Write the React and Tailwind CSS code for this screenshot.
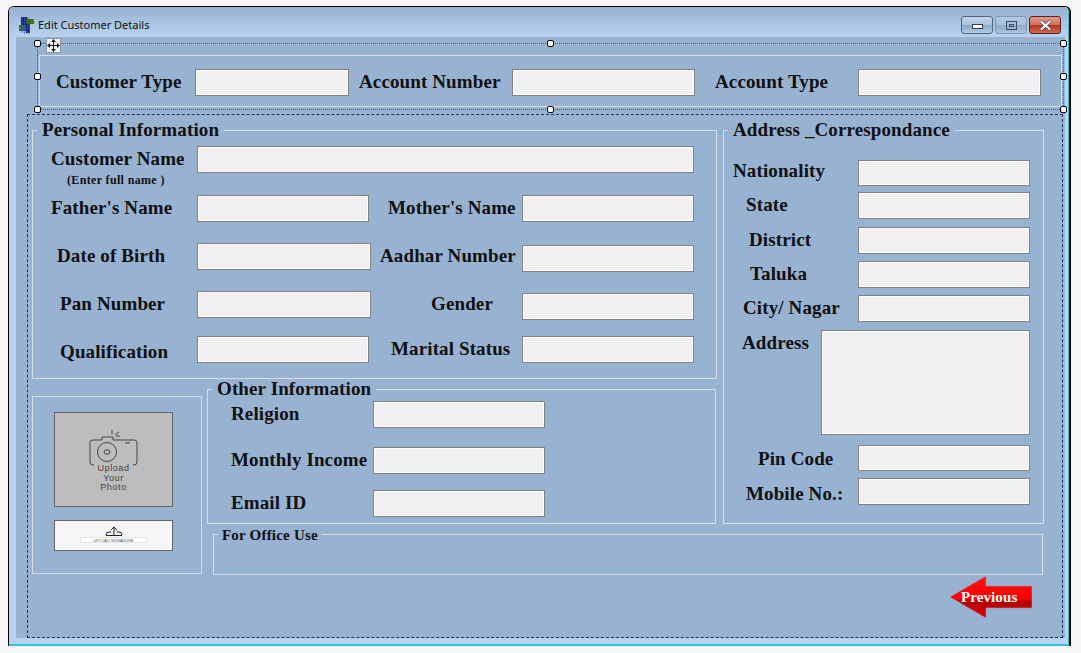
const serif = "font-['Liberation_Serif',serif] font-bold text-[#101010]";
const input = "block shrink-0 border border-[#808080] bg-[#f0f0f0] shadow-[inset_0_0_0_1px_#fff] outline-none";

function Legend({ className, children }) {
  return <span className={`absolute ${serif} bg-[#98b3d1] ${className}`}>{children}</span>;
}

function Label({ className, children }) {
  return (
    <span className={`flex h-[27px] shrink-0 items-center whitespace-nowrap text-[19px] tracking-[0.12px] ${serif} ${className}`}>
      {children}
    </span>
  );
}

function Handle({ className }) {
  return <span className={`absolute h-[7px] w-[7px] rounded-[2px] border border-black bg-white ${className}`} />;
}

function WindowIcon() {
  return (
    <svg width="16" height="17" viewBox="0 0 16 17" className="mr-[3px]">
      <rect x="2" y="0" width="6" height="9" fill="#14246e" />
      <rect x="7" y="2" width="8" height="5" fill="#2f6a1c" />
      <rect x="0" y="8" width="7" height="6" fill="#2f6a1c" />
      <rect x="7" y="7" width="4" height="9" fill="#14246e" />
      <path d="M3.5 0v16M5.5 0v17M8.5 0v17M10.5 1v15" stroke="#3b58c8" strokeWidth="0.7" />
      <path d="M12 3.5h3M12 5.5h4M0 10h2M0 12h2" stroke="#6d9a55" strokeWidth="0.6" />
    </svg>
  );
}

function WindowButtons() {
  return (
    <div className="flex gap-[2px]">
      <div className="flex h-[18px] w-[32px] items-end justify-center rounded-[3px] border border-[#4f6580] bg-[linear-gradient(#c3d6ea_0%,#a9c2dc_48%,#8aa7c6_52%,#b5cde6_100%)] pb-[4px]">
        <span className="h-[5px] w-[11px] border border-[#2e3f52] bg-white" />
      </div>
      <div className="flex h-[18px] w-[32px] items-center justify-center rounded-[3px] border border-[#7f98b5] bg-[linear-gradient(#b4cae1_0%,#a6bfd9_48%,#8fabc9_52%,#aac3de_100%)]">
        <span className="flex h-[9px] w-[11px] items-center justify-center border border-[#3b4d62]">
          <span className="h-[3px] w-[5px] border border-[#3b4d62]" />
        </span>
      </div>
      <div className="flex h-[18px] w-[32px] items-center justify-center rounded-[3px] border border-[#5c1f1a] bg-[linear-gradient(#dc9a8a_0%,#d0705c_48%,#b8321f_52%,#cf6a50_100%)]">
        <svg width="13" height="11" viewBox="0 0 13 11">
          <path d="M2 1.5l9 8M11 1.5l-9 8" stroke="#3a4756" strokeWidth="3.6" />
          <path d="M2 1.5l9 8M11 1.5l-9 8" stroke="#fff" strokeWidth="2.2" />
        </svg>
      </div>
    </div>
  );
}

function MoveIcon() {
  return (
    <span className="absolute left-[8px] top-[-6px] flex h-[15px] w-[15px] items-center justify-center rounded-[1px] border border-[#8a97a8] bg-[#f4f6fa]">
      <svg width="13" height="13" viewBox="0 0 13 13" fill="#1c1c1c">
        <path d="M6 3h1v7H6zM3 6h7v1H3z" />
        <path d="M6.5 0L9 3H4zM6.5 13L4 10h5zM0 6.5L3 4v5zM13 6.5L10 9V4z" />
      </svg>
    </span>
  );
}

function PhotoBox() {
  return (
    <div className="mt-[7px] h-[178px] w-[170px] border border-[#d5dbe3] pl-[21px] pt-[15px]">
      <div className="flex h-[95px] w-[119px] flex-col items-center border border-[#666] bg-[#bdbdbd] pt-[14px]">
        <svg width="52" height="42" viewBox="0 0 52 42" fill="none" stroke="#444" strokeWidth="1" className="-ml-[2px]">
          <path d="M7 38H6q-3 0-3-3V15q0-2 3-2h9v-3h11v3h21q3 0 3 2v20q0 3-3 3h-1" />
          <circle cx="20" cy="25" r="9.5" />
          <ellipse cx="20" cy="25" rx="3" ry="2.2" />
          <path d="M38 16h5M25 3v4M28 8l4-3M29 9h4" />
        </svg>
        <div className="-mt-[5px] text-center font-['Liberation_Sans',sans-serif] text-[9px] leading-[9.5px] tracking-[0.6px] text-[#444]">
          Upload
          <br />
          Your
          <br />
          Photo
        </div>
      </div>
      <div className="mt-[13px] flex h-[31px] w-[119px] flex-col items-center border border-[#666] bg-[#f6f6f6] pt-[5px]">
        <svg width="18" height="10" viewBox="0 0 18 10" fill="none" stroke="#222" strokeWidth="1">
          <path d="M1 9q0-3 3-3h2M17 9q0-3-3-3h-2M9 9V2M6 4l3-3 3 3" />
          <path d="M1 9.5h16" />
        </svg>
        <div className="mt-[1px] h-[6px] w-[67px] border border-[#e6e6e6] bg-white text-center font-['Liberation_Sans',sans-serif] text-[4px] leading-[5px] text-[#555]">
          UPLOAD SIGNATURE
        </div>
      </div>
    </div>
  );
}

function PreviousButton() {
  return (
    <div className="relative h-[42px] w-[82px]">
      <svg width="82" height="42" viewBox="0 0 82 42" className="block">
        <defs>
          <linearGradient id="prev" x1="0" y1="0" x2="0" y2="1">
            <stop offset="0" stopColor="#ff1414" />
            <stop offset="0.55" stopColor="#f50000" />
            <stop offset="0.6" stopColor="#b00000" />
            <stop offset="1" stopColor="#e00000" />
          </linearGradient>
        </defs>
        <path d="M0 21L36 0V10H82V32H36V42Z" fill="url(#prev)" stroke="#b58a9a" strokeWidth="0.6" />
      </svg>
      <span className="absolute left-[11px] top-[12px] font-['Liberation_Serif',serif] text-[15px] font-bold leading-[18px] tracking-[0.1px] text-white">
        Previous
      </span>
    </div>
  );
}

export default function App() {
  return (
    <div className="h-[653px] w-[1081px] overflow-hidden bg-[#f6f6f6] pl-[8px] pt-[6px]">
      <div className="h-[640px] w-[1063px] rounded-t-[6px] border-l border-r-2 border-t border-black">
        <div className="h-full rounded-t-[5px] border-b-2 border-r border-[#2cc4dc] bg-[#b8d3ee]">
          {/* Title bar */}
          <div className="flex h-[30px] items-center rounded-t-[5px] bg-[linear-gradient(#97b2d0,#b8d3ee)] pl-[10px] pr-[7px] pt-[6px]">
            <WindowIcon />
            <span className="flex-1 font-['Noto_Sans',sans-serif] text-[11px] text-[#101010]">Edit Customer Details</span>
            <WindowButtons />
          </div>

          {/* Client area */}
          <div className="ml-[7px] h-[601px] w-[1049px] bg-[#98b3d1] pt-[6px]">
            {/* Selected header panel */}
            <div className="relative ml-[21px] h-[67px] w-[1027px] border border-dotted border-[#4a5a6e]">
              <Handle className="left-[-4px] top-[-4px]" />
              <Handle className="left-[-4px] top-[29px]" />
              <Handle className="left-[-4px] top-[62px]" />
              <Handle className="left-[509px] top-[-4px]" />
              <Handle className="left-[509px] top-[62px]" />
              <Handle className="left-[1022px] top-[-4px]" />
              <Handle className="left-[1022px] top-[29px]" />
              <Handle className="left-[1022px] top-[62px]" />
              <MoveIcon />
              <div className="ml-[1px] mt-[11px] flex h-[52px] w-[1023px] border border-[#d5dde6] pt-[13px]">
                <Label className="w-[155px] pl-[16px]">Customer Type</Label>
                <input readOnly className={`${input} h-[27px] w-[154px]`} />
                <Label className="w-[163px] pl-[10px]">Account Number</Label>
                <input readOnly className={`${input} h-[27px] w-[183px]`} />
                <Label className="w-[163px] pl-[20px]">Account Type</Label>
                <input readOnly className={`${input} h-[27px] w-[183px]`} />
              </div>
            </div>

            {/* Main dashed panel */}
            <div className="ml-[11px] mt-[4px] h-[524px] w-[1036px] border border-dashed border-[#1d3557] pl-[4px] pt-[15px]">
              <div className="grid grid-cols-[175px_516px_321px] grid-rows-[259px_145px_41px]">
                {/* Personal Information */}
                <div className="relative col-span-2 h-[249px] w-[685px] border border-[#d5dde6] pt-[15px]">
                  <Legend className="left-[4px] top-[-11px] px-[5px] text-[19px] leading-[20px] tracking-[0.12px]">Personal Information</Legend>
                  <div className="flex">
                    <Label className="w-[164px] pl-[18px]">Customer Name</Label>
                    <input readOnly className={`${input} h-[27px] w-[497px]`} />
                  </div>
                  <div className={`h-[14px] pl-[34px] text-[12px] leading-[14px] tracking-[0.35px] ${serif}`}>(Enter full name )</div>
                  <div className="mt-[8px] flex items-start">
                    <Label className="w-[164px] pl-[18px]">Father's Name</Label>
                    <input readOnly className={`${input} h-[27px] w-[172px]`} />
                    <Label className="w-[153px] pl-[19px]">Mother's Name</Label>
                    <input readOnly className={`${input} h-[27px] w-[172px]`} />
                  </div>
                  <div className="mt-[21px] flex items-start">
                    <Label className="w-[164px] pl-[24px]">Date of Birth</Label>
                    <input readOnly className={`${input} h-[27px] w-[174px]`} />
                    <Label className="w-[151px] pl-[9px]">Aadhar Number</Label>
                    <input readOnly className={`${input} mt-[2px] h-[27px] w-[172px]`} />
                  </div>
                  <div className="mt-[19px] flex items-start">
                    <Label className="w-[164px] pl-[27px]">Pan Number</Label>
                    <input readOnly className={`${input} h-[27px] w-[174px]`} />
                    <Label className="w-[151px] pl-[60px]">Gender</Label>
                    <input readOnly className={`${input} mt-[2px] h-[27px] w-[172px]`} />
                  </div>
                  <div className="mt-[16px] flex items-start">
                    <Label className="mt-[3px] w-[164px] pl-[27px]">Qualification</Label>
                    <input readOnly className={`${input} h-[27px] w-[172px]`} />
                    <Label className="w-[153px] pl-[22px]">Marital Status</Label>
                    <input readOnly className={`${input} h-[27px] w-[172px]`} />
                  </div>
                </div>

                {/* Address */}
                <div className="relative row-span-2 h-[394px] w-[321px] border border-[#d5dde6] pt-[28px]">
                  <Legend className="left-[4px] top-[-11px] px-[5px] text-[19px] leading-[20px] tracking-[0.12px]">Address _Correspondance</Legend>
                  <div className="mt-[1px] flex items-start">
                    <Label className="-mt-[2px] w-[134px] pl-[9px]">Nationality</Label>
                    <input readOnly className={`${input} h-[26px] w-[172px]`} />
                  </div>
                  <div className="mt-[6px] flex items-start">
                    <Label className="w-[134px] pl-[22px]">State</Label>
                    <input readOnly className={`${input} h-[27px] w-[172px]`} />
                  </div>
                  <div className="mt-[8px] flex items-start">
                    <Label className="w-[134px] pl-[25px]">District</Label>
                    <input readOnly className={`${input} h-[27px] w-[172px]`} />
                  </div>
                  <div className="mt-[7px] flex items-start">
                    <Label className="w-[134px] pl-[26px]">Taluka</Label>
                    <input readOnly className={`${input} h-[27px] w-[172px]`} />
                  </div>
                  <div className="mt-[7px] flex items-start">
                    <Label className="w-[134px] pl-[19px]">City/ Nagar</Label>
                    <input readOnly className={`${input} h-[27px] w-[172px]`} />
                  </div>
                  <div className="mt-[8px] flex items-start">
                    <Label className="w-[97px] pl-[18px]">Address</Label>
                    <textarea readOnly className={`${input} h-[105px] w-[209px] resize-none`} />
                  </div>
                  <div className="mt-[10px] flex items-start">
                    <Label className="mt-[1px] w-[134px] pl-[34px]">Pin Code</Label>
                    <input readOnly className={`${input} h-[26px] w-[172px]`} />
                  </div>
                  <div className="mt-[5px] flex items-start">
                    <Label className="mt-[3px] w-[134px] pl-[22px]">Mobile No.:</Label>
                    <input readOnly className={`${input} h-[27px] w-[172px]`} />
                  </div>
                </div>

                {/* Photo + signature */}
                <div className="row-span-2">
                  <PhotoBox />
                </div>

                {/* Other Information */}
                <div className="relative h-[135px] w-[509px] border border-[#d5dde6] pt-[11px]">
                  <Legend className="left-[4px] top-[-11px] px-[5px] text-[19px] leading-[20px] tracking-[0.12px]">Other Information</Legend>
                  <div className="flex items-start">
                    <Label className="w-[165px] pl-[23px]">Religion</Label>
                    <input readOnly className={`${input} h-[27px] w-[172px]`} />
                  </div>
                  <div className="mt-[19px] flex items-start">
                    <Label className="w-[165px] pl-[23px]">Monthly Income</Label>
                    <input readOnly className={`${input} h-[27px] w-[172px]`} />
                  </div>
                  <div className="mt-[16px] flex items-start">
                    <Label className="w-[165px] pl-[23px]">Email ID</Label>
                    <input readOnly className={`${input} h-[27px] w-[172px]`} />
                  </div>
                </div>

                {/* For Office Use */}
                <div className="relative col-span-2 ml-[6px] h-[41px] w-[830px] border border-[#d5dde6]">
                  <Legend className="left-[4px] top-[-8px] px-[4px] text-[15px] leading-[16px] tracking-[0.2px]">For Office Use</Legend>
                </div>
              </div>

              <div className="mt-[1px] flex justify-end pr-[30px]">
                <PreviousButton />
              </div>
            </div>
          </div>
        </div>
      </div>
    </div>
  );
}
